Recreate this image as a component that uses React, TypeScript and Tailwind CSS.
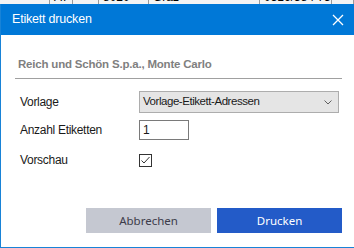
const cells = [
  { w: 'w-[50px]', text: '' },
  { w: 'w-[23px]', text: 'AT' },
  { w: 'w-[26px]', text: '' },
  { w: 'w-[50px]', text: '8020' },
  { w: 'w-[111px]', text: 'Graz' },
  { w: 'w-[72px]', text: '0316/384 75-0' },
  { w: 'flex-1', text: '' },
];

const App = () => {
  return (
    <div className="w-[354px] h-[248px] bg-white overflow-hidden flex flex-col font-['Liberation_Sans',sans-serif]">
      {/* background window peeking out on top */}
      <div className="h-[4px] overflow-hidden flex bg-[#f4f4f4]">
        {cells.map((c, i) => (
          <div key={i} className={`${c.w} h-[16px] -mt-[11px] border-r border-[#9a9a9a] pl-[4px] text-[12px] leading-[16px] text-black whitespace-nowrap overflow-hidden`}>
            {c.text}
          </div>
        ))}
      </div>

      <div className="flex-1 flex flex-col border-l border-b border-[#1883d7]">
        {/* title bar */}
        <div className="h-[31px] bg-[#0078d7] flex items-center justify-between pl-[11px] pr-[9px] shrink-0">
          <span className="text-white text-[12.5px] tracking-[-0.2px]">Etikett drucken</span>
          <svg width="12" height="12" viewBox="0 0 12 12" className="mr-[1px]">
            <path d="M1 1 L11 11 M11 1 L1 11" stroke="white" strokeWidth="1.3" fill="none" />
          </svg>
        </div>

        <div className="flex-1 flex flex-col pl-[14px] pr-[12px]">
          <div className="mt-[21px] pb-[6px] pl-[3px] border-b border-[#a0a0a0] text-[11.5px] leading-[16px] font-bold text-[#7f7f7f] tracking-[-0.2px]">
            Reich und Schön S.p.a., Monte Carlo
          </div>

          <div className="mt-[12px] pl-[5px] grid grid-cols-[119px_200px] gap-y-[7px] items-center text-[12px] tracking-[-0.3px] text-[#1a1a1a]">
            <span>Vorlage</span>
            <div className="h-[22px] bg-[#e5e5e5] border border-[#adadad] flex items-center justify-between pl-[3px] pr-[6px]">
              <span className="text-[11.5px] tracking-[-0.45px]">Vorlage-Etikett-Adressen</span>
              <svg width="8" height="5" viewBox="0 0 8 5">
                <path d="M0.5 0.5 L4 4 L7.5 0.5" stroke="#606060" strokeWidth="1" fill="none" />
              </svg>
            </div>

            <span>Anzahl Etiketten</span>
            <div className="w-[50px] h-[20px] border border-[#7a7a7a] bg-white flex items-center pl-[3px]">1</div>

            <span className="mt-[4px]">Vorschau</span>
            <div className="mt-[4px] w-[13px] h-[13px] border border-[#333333] bg-white flex items-center justify-center">
              <svg width="11" height="11" viewBox="0 0 11 11">
                <path d="M1.5 5.5 L4 8 L9.5 2" stroke="#333333" strokeWidth="1" fill="none" />
              </svg>
            </div>
          </div>

          <div className="mt-auto mb-[14px] flex justify-end gap-[6px] font-['Noto_Sans',sans-serif] text-[11.5px]">
            <button className="w-[125px] h-[25px] bg-[#c5c8d1] text-[#3c3c4a]">Abbrechen</button>
            <button className="w-[125px] h-[25px] bg-[#235bc8] text-white">Drucken</button>
          </div>
        </div>
      </div>
    </div>
  );
};

export default App;
